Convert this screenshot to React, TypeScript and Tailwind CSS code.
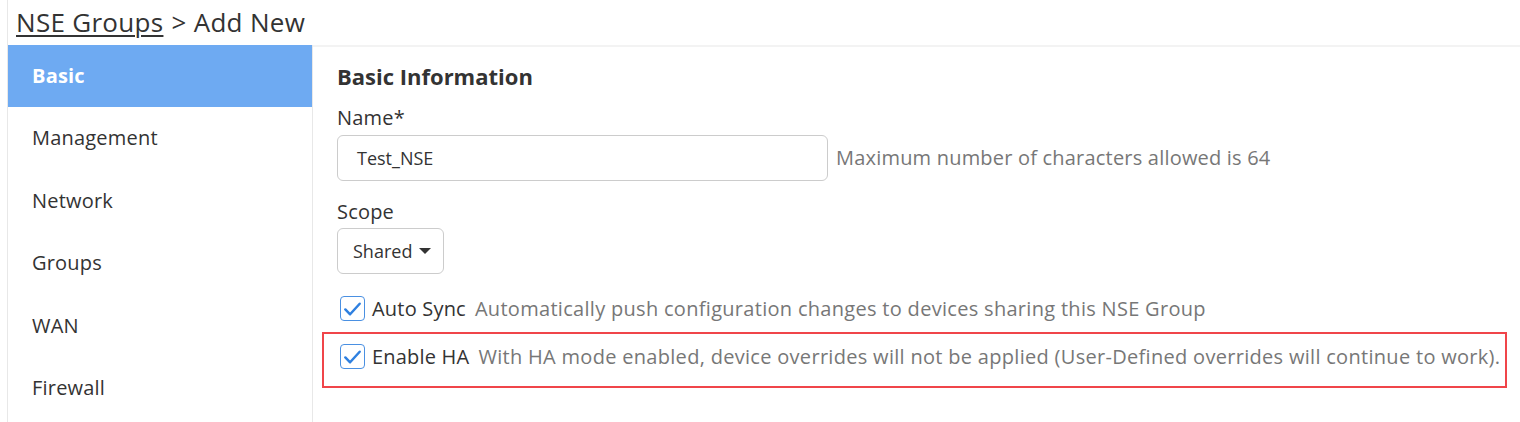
import React from "react";

const font = { fontFamily: "'Open Sans', sans-serif" };

function Check() {
  return (
    <span className="flex h-[25px] w-[25px] shrink-0 items-center justify-center rounded-[4px] border-[1.5px] border-[#4a90e2] bg-white">
      <svg width="24" height="24" viewBox="0 0 24 24" fill="none">
        <path d="M4.5 12.5 L9.5 17.5 L19.5 6.5" stroke="#2f80e0" strokeWidth="2.6" strokeLinecap="round" strokeLinejoin="round" />
      </svg>
    </span>
  );
}

export default function App() {
  const nav = ["Basic", "Management", "Network", "Groups", "WAN", "Firewall"];
  return (
    <div className="h-[422px] w-[1520px] overflow-hidden bg-white text-[#333]" style={font}>
      <div className="ml-[7px] flex h-full flex-col border-l border-[#e8e8e8]">
        <div className="flex h-[45px] items-center pl-[8px] text-[26px] tracking-[0.3px] text-[#333]">
          <span className="underline decoration-[1.5px] underline-offset-[3px]">NSE Groups</span>
          <span className="ml-[8px]">&gt; Add New</span>
        </div>
        <div className="flex flex-1">
          <div className="w-[305px] shrink-0 border-r border-[#e8e8e8]">
            {nav.map((n, i) => (
              <div
                key={n}
                className={
                  i === 0
                    ? "flex h-[62px] items-center bg-[#6eaaf2] pl-[24px] text-[20px] font-bold tracking-[0.2px] text-white"
                    : "flex h-[62.5px] items-center pl-[24px] text-[20px] tracking-[0.2px] text-[#333]"
                }
              >
                {n}
              </div>
            ))}
          </div>
          <div className="flex-1 border-t-[2px] border-[#f3f3f3] pl-[24px] pt-[15px]">
            <div className="text-[22px] font-bold leading-[28px] text-[#333]">Basic Information</div>
            <div className="mt-[17px] text-[20px] leading-[22px] tracking-[0.2px]">Name*</div>
            <div className="mt-[6px] flex items-center">
              <div className="flex h-[46px] w-[491px] items-center rounded-[6px] border border-[#ccc] pl-[19px] text-[18px]">
                Test_NSE
              </div>
              <span className="ml-[8px] text-[20px] tracking-[0.2px] text-[#777]">
                Maximum number of characters allowed is 64
              </span>
            </div>
            <div className="mt-[20px] text-[20px] leading-[22px] tracking-[0.2px]">Scope</div>
            <div className="mt-[5px] flex h-[46px] w-[107px] items-center rounded-[6px] border border-[#ccc] pl-[15px] text-[18px]">
              Shared
              <svg className="ml-[7px]" width="12" height="6" viewBox="0 0 12 6">
                <path d="M0 0 L12 0 L6 6 Z" fill="#333" />
              </svg>
            </div>
            <div className="mt-[22px] flex h-[25px] items-center pl-[3px]">
              <Check />
              <span className="ml-[7px] text-[20px] tracking-[0.2px] text-[#333]">Auto Sync</span>
              <span className="ml-[9px] text-[20px] tracking-[0.3px] text-[#777]">
                Automatically push configuration changes to devices sharing this NSE Group
              </span>
            </div>
            <div className="ml-[-15px] mt-[11px] h-[56px] w-[1185px] border-2 border-[#f0454a] pl-[16px] pt-[10px]">
              <div className="flex h-[25px] items-center">
                <Check />
                <span className="ml-[7px] text-[20px] tracking-[0.2px] text-[#333]">Enable HA</span>
                <span className="ml-[9px] text-[20px] tracking-[0.3px] text-[#777]">
                  With HA mode enabled, device overrides will not be applied (User-Defined overrides will continue to work).
                </span>
              </div>
            </div>
          </div>
        </div>
      </div>
    </div>
  );
}
